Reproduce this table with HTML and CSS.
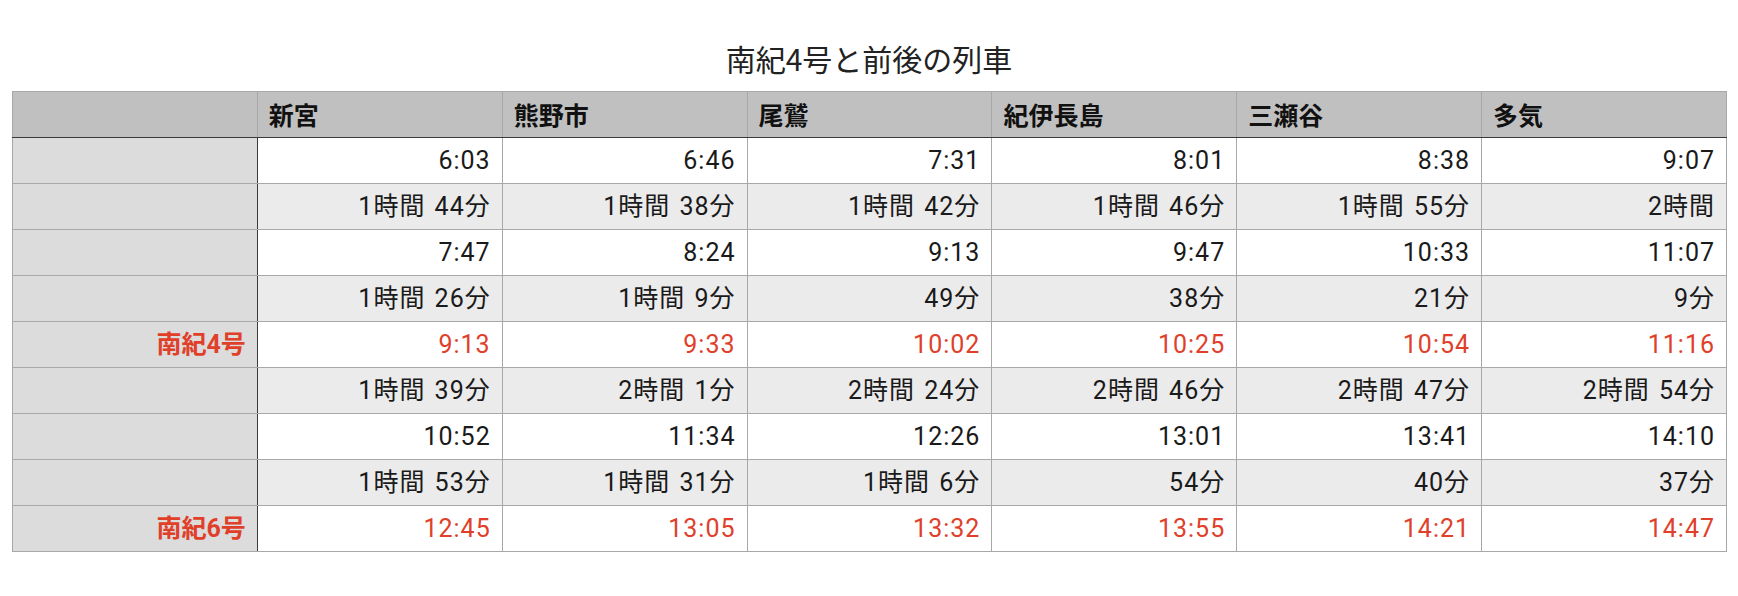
FILE: index.html
```html
<!DOCTYPE html>
<html lang="ja">
<head>
<meta charset="utf-8">
<title>南紀4号と前後の列車</title>
<link rel="stylesheet" href="styles.css">
</head>
<body>
<div class="page">
  <h1 class="title">南紀4号と前後の列車</h1>
  <table class="tt">
    <thead>
      <tr>
        <th class="corner"></th>
        <th>新宮</th><th>熊野市</th><th>尾鷲</th><th>紀伊長島</th><th>三瀬谷</th><th>多気</th>
      </tr>
    </thead>
    <tbody>
      <tr class="w"><th class="rh"></th><td>6:03</td><td>6:46</td><td>7:31</td><td>8:01</td><td>8:38</td><td>9:07</td></tr>
      <tr class="g"><th class="rh"></th><td>1時間 44分</td><td>1時間 38分</td><td>1時間 42分</td><td>1時間 46分</td><td>1時間 55分</td><td>2時間</td></tr>
      <tr class="w"><th class="rh"></th><td>7:47</td><td>8:24</td><td>9:13</td><td>9:47</td><td>10:33</td><td>11:07</td></tr>
      <tr class="g"><th class="rh"></th><td>1時間 26分</td><td>1時間 9分</td><td>49分</td><td>38分</td><td>21分</td><td>9分</td></tr>
      <tr class="w red"><th class="rh">南紀4号</th><td>9:13</td><td>9:33</td><td>10:02</td><td>10:25</td><td>10:54</td><td>11:16</td></tr>
      <tr class="g"><th class="rh"></th><td>1時間 39分</td><td>2時間 1分</td><td>2時間 24分</td><td>2時間 46分</td><td>2時間 47分</td><td>2時間 54分</td></tr>
      <tr class="w"><th class="rh"></th><td>10:52</td><td>11:34</td><td>12:26</td><td>13:01</td><td>13:41</td><td>14:10</td></tr>
      <tr class="g"><th class="rh"></th><td>1時間 53分</td><td>1時間 31分</td><td>1時間 6分</td><td>54分</td><td>40分</td><td>37分</td></tr>
      <tr class="w red"><th class="rh">南紀6号</th><td>12:45</td><td>13:05</td><td>13:32</td><td>13:55</td><td>14:21</td><td>14:47</td></tr>
    </tbody>
  </table>
</div>
</body>
</html>
```

FILE: styles.css
```css
html, body {
  margin: 0;
  padding: 0;
  background: #ffffff;
}

.page {
  font-family: "Roboto", "Noto Sans CJK JP", "Noto Sans", sans-serif;
  color: #1a1a1a;
  padding-top: 40px;
}

.title {
  margin: 0 0 15px 0;
  height: 36px;
  line-height: 36px;
  font-family: "Noto Sans CJK JP", sans-serif;
  font-size: 30px;
  font-weight: 400;
  text-align: center;
  color: #222222;
}

.tt {
  margin-left: 12px;
  width: 1715px;
  table-layout: fixed;
  border-collapse: collapse;
  font-size: 25px;
}

.tt th,
.tt td {
  border: 1px solid #a8a8a8;
  height: 46px;
  padding: 0 11px;
  line-height: 1;
  vertical-align: middle;
  box-sizing: border-box;
}

.tt thead th {
  background: #c0c0c0;
  font-family: "Noto Sans CJK JP", sans-serif;
  font-weight: 700;
  text-align: left;
  color: #111111;
  border-bottom: 1px solid #3a3a3a;
}

.tt td {
  text-align: right;
  font-weight: 400;
  letter-spacing: 1px;
  word-spacing: 2px;
}

.tt .rh {
  background: #dcdcdc;
  text-align: right;
  font-weight: 700;
  border-right: 1px solid #3a3a3a;
}

.tt tr.w td {
  background: #ffffff;
}

.tt tr.g td {
  background: #ebebeb;
}

.tt tr.red td,
.tt tr.red .rh {
  color: #e0402a;
}
```
